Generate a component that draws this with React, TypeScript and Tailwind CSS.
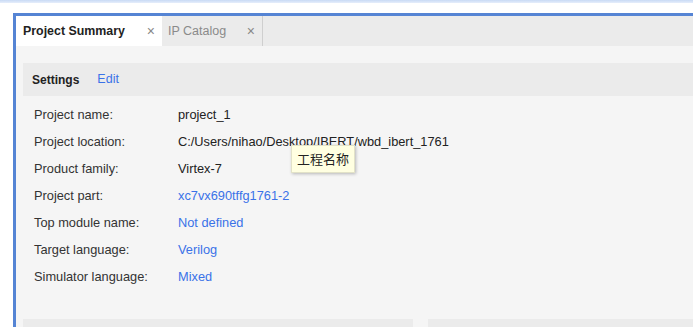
import React from "react";

const rows: { label: string; value: string; link?: boolean }[] = [
  { label: "Project name:", value: "project_1" },
  { label: "Project location:", value: "C:/Users/nihao/Desktop/IBERT/wbd_ibert_1761" },
  { label: "Product family:", value: "Virtex-7" },
  { label: "Project part:", value: "xc7vx690tffg1761-2", link: true },
  { label: "Top module name:", value: "Not defined", link: true },
  { label: "Target language:", value: "Verilog", link: true },
  { label: "Simulator language:", value: "Mixed", link: true },
];

export default function App() {
  return (
    <div
      className="relative w-[693px] h-[327px] overflow-hidden bg-white flex flex-col"
      style={{ fontFamily: '"Liberation Sans", Arial, sans-serif' }}
    >
      <div className="h-[3px] bg-gradient-to-b from-[#c9daf5] to-[#e6eefb] shrink-0" />
      <div className="flex-1 flex flex-col pl-[13px] pt-[10px]">
        <div className="flex-1 flex flex-col border-l-[3px] border-t-[3px] border-[#5584d4]">
          {/* tab bar */}
          <div className="h-[30px] bg-[#ebebeb] flex shrink-0">
            <div className="w-[146px] bg-white flex items-center pl-[7px] pr-[7px] justify-between">
              <span className="text-[12.4px] font-bold text-[#222]">Project Summary</span>
              <span className="text-[14px] text-[#888] leading-none">×</span>
            </div>
            <div className="w-[101px] flex items-center pl-[6px] pr-[7px] justify-between border-r border-[#cfcfcf]">
              <span className="text-[12.5px] text-[#8a8a8a]">IP Catalog</span>
              <span className="text-[14px] text-[#888] leading-none">×</span>
            </div>
          </div>
          {/* content */}
          <div className="flex-1 bg-[#f5f5f5] pl-[7px] pt-[17px] flex flex-col">
            <div className="h-[33px] bg-[#ebebeb] flex items-center pl-[9px] gap-[18px] shrink-0">
              <span className="text-[12px] font-bold text-[#222]">Settings</span>
              <span className="text-[12.5px] text-[#3a72e8]">Edit</span>
            </div>
            <div className="pt-[5px] pl-[11px] flex flex-col">
              {rows.map((r) => (
                <div key={r.label} className="h-[27px] flex items-center text-[12.8px]">
                  <span className="w-[144px] text-[#333]">{r.label}</span>
                  <span className={r.link ? "text-[#3a72e8]" : "text-[#222]"}>{r.value}</span>
                </div>
              ))}
            </div>
            <div className="mt-[29px] flex gap-[15px] flex-1">
              <div className="w-[390px] bg-[#ebebeb]" />
              <div className="flex-1 bg-[#ebebeb]" />
            </div>
          </div>
        </div>
      </div>
      {/* tooltip */}
      <div
        className="absolute left-[291px] top-[145px] w-[64px] h-[28px] bg-[#ffffe1] border border-[#e2e2c8] shadow-[1px_1px_3px_rgba(0,0,0,0.25)] flex items-center justify-center text-[13px] text-[#222]"
        style={{ fontFamily: '"Noto Sans CJK SC", "Noto Sans CJK JP", sans-serif' }}
      >
        工程名称
      </div>
    </div>
  );
}
